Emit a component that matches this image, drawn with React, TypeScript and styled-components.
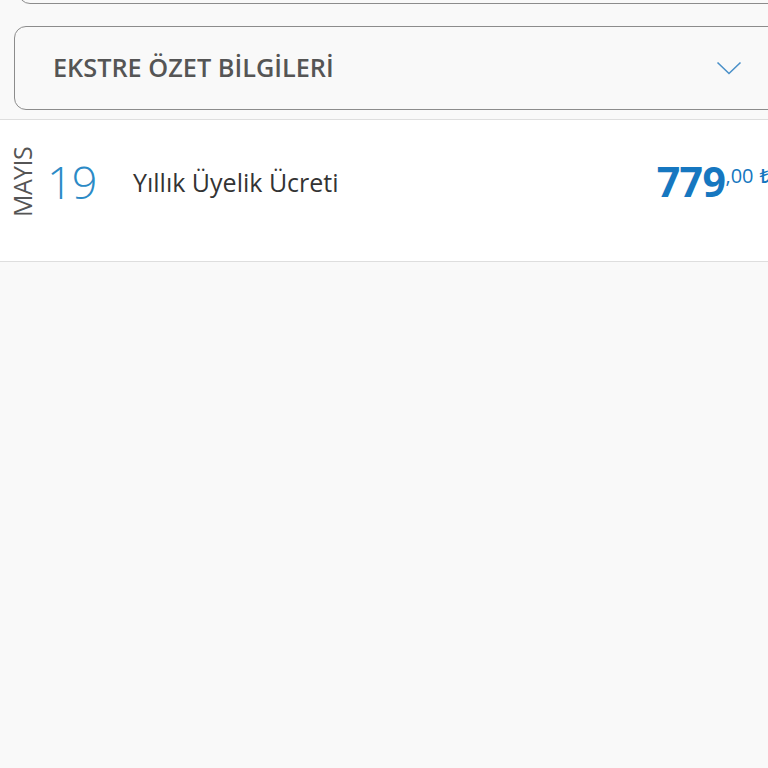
import styled, { createGlobalStyle } from 'styled-components'

const GlobalStyle = createGlobalStyle`
  html, body {
    margin: 0;
    padding: 0;
    background: #f9f9f9;
    overflow: hidden;
  }
  body {
    font-family: "Open Sans", "Noto Sans", sans-serif;
  }
`

const Page = styled.div`
  width: 784px;
  height: 848px;
  background: #f9f9f9;
  margin-top: -80px;
`

const Card = styled.div<{ $inset: number }>`
  margin: 0 0 0 ${(p) => p.$inset}px;
  height: 82px;
  border: 1px solid #8c8c8c;
  border-radius: 12px;
  background: #f9f9f9;
  display: flex;
  align-items: center;
  justify-content: space-between;
  padding: 0 24px 0 38px;
`

const CardGap = styled.div`
  height: 22px;
`

const CardTitle = styled.span`
  font-size: 25.3px;
  font-weight: 600;
  color: #555555;
  margin-top: -2px;
`

const Chevron = styled.svg`
  width: 26px;
  height: 16px;
  margin-right: 17px;
`

const Divider = styled.div`
  height: 9px;
  border-bottom: 1px solid #dedede;
`

const Row = styled.div`
  height: 142px;
  box-sizing: border-box;
  background: #ffffff;
  border-bottom: 1px solid #dedede;
  display: flex;
  align-items: center;
  padding: 0 13px 18px 10px;
`

const Month = styled.span`
  writing-mode: vertical-rl;
  transform: rotate(180deg);
  font-size: 25px;
  font-weight: 400;
  color: #555555;
  letter-spacing: -0.6px;
  line-height: 1;
`

const Day = styled.span`
  font-size: 45px;
  font-weight: 300;
  color: #2b8ac6;
  margin-left: 12px;
  width: 86px;
  letter-spacing: -1px;
`

const Desc = styled.span`
  font-size: 25px;
  color: #333333;
  flex: 1;
`

const Amount = styled.span`
  display: flex;
  align-items: flex-start;
  color: #1677c0;
`

const Whole = styled.span`
  font-size: 41px;
  font-weight: 700;
  letter-spacing: -0.5px;
  line-height: 1;
`

const Cents = styled.span`
  font-size: 20px;
  font-weight: 500;
  margin-top: 1px;
`

const Currency = styled.span`
  font-size: 20px;
  font-weight: 500;
  margin-top: 1px;
  margin-left: 6px;
`

export default function App() {
  return (
    <>
      <GlobalStyle />
      <Page>
        <Card $inset={18} />
        <CardGap />
        <Card $inset={14}>
          <CardTitle>EKSTRE ÖZET BİLGİLERİ</CardTitle>
          <Chevron viewBox="0 0 26 16">
            <path d="M1.5 2.5 L13 13.5 L24.5 2.5" fill="none" stroke="#4a90c8" strokeWidth="1.6" />
          </Chevron>
        </Card>
        <Divider />
        <Row>
          <Month>MAYIS</Month>
          <Day>19</Day>
          <Desc>Yıllık Üyelik Ücreti</Desc>
          <Amount>
            <Whole>779</Whole>
            <Cents>,00</Cents>
            <Currency>₺</Currency>
          </Amount>
        </Row>
      </Page>
    </>
  )
}
